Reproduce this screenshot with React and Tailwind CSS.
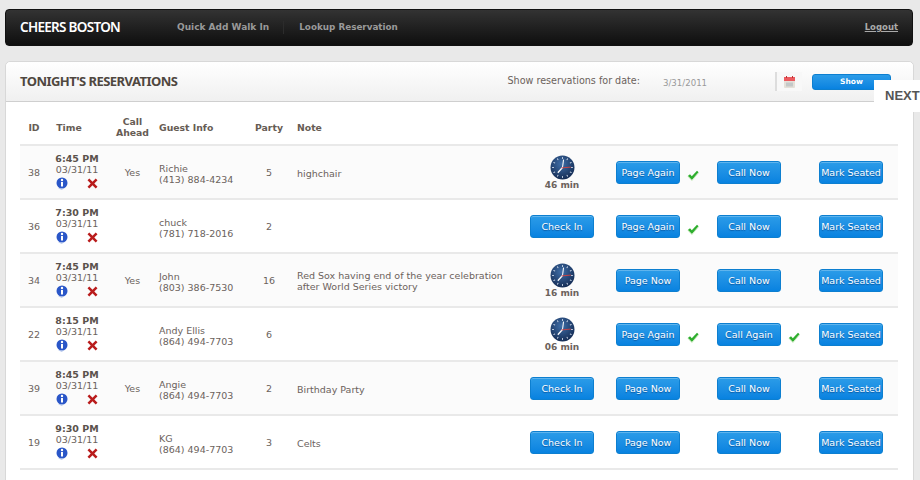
import React from 'react';

const rows = [
  { id: 38, time: '6:45 PM', ahead: 'Yes', name: 'Richie', phone: '(413) 884-4234', party: 5, note: 'highchair', wait: '46 min', page: 'Page Again', pageOk: true, call: 'Call Now', shade: true },
  { id: 36, time: '7:30 PM', ahead: '', name: 'chuck', phone: '(781) 718-2016', party: 2, note: '', page: 'Page Again', pageOk: true, call: 'Call Now' },
  { id: 34, time: '7:45 PM', ahead: 'Yes', name: 'John', phone: '(803) 386-7530', party: 16, note: 'Red Sox having end of the year celebration after World Series victory', wait: '16 min', page: 'Page Now', call: 'Call Now', shade: true },
  { id: 22, time: '8:15 PM', ahead: '', name: 'Andy Ellis', phone: '(864) 494-7703', party: 6, note: '', wait: '06 min', page: 'Page Again', pageOk: true, call: 'Call Again', callOk: true },
  { id: 39, time: '8:45 PM', ahead: 'Yes', name: 'Angie', phone: '(864) 494-7703', party: 2, note: 'Birthday Party', page: 'Page Now', call: 'Call Now', shade: true },
  { id: 19, time: '9:30 PM', ahead: '', name: 'KG', phone: '(864) 494-7703', party: 3, note: 'Celts', page: 'Page Now', call: 'Call Now' },
];

const BlueButton = ({ children }) => (
  <button type="button" className="w-16 h-[23px] mt-[1px] rounded-[3px] border border-[#0d7fd0] bg-gradient-to-b from-[#2b9ce8] to-[#0782e0] text-white text-[9.5px] leading-none whitespace-nowrap [text-shadow:0_1px_1px_rgba(0,50,110,0.6)] shadow-[inset_0_1px_0_rgba(255,255,255,0.25)]">
    {children}
  </button>
);

const CheckIcon = () => (
  <svg width="12" height="11" viewBox="0 0 12 11" className="ml-[7px] mt-[7px]">
    <path d="M0.8 6 L3 4.2 L4.8 6.2 L10 0.8 L11.6 2.2 L4.9 10 Z" fill="#2eae2e" />
    <path d="M1 6.3 L4.9 10.6 L11.4 3" fill="none" stroke="#bfe6b0" strokeWidth="0.8" />
  </svg>
);

const InfoIcon = () => (
  <svg width="12" height="13" viewBox="0 0 12 13">
    <circle cx="6" cy="6" r="5.5" fill="#2a56c8" />
    <path d="M2 11.5 L6 12.8 L8 11 Z" fill="#9db4e6" />
    <circle cx="6" cy="3" r="1.2" fill="#fff" />
    <rect x="5" y="5" width="2" height="4.5" fill="#fff" />
  </svg>
);

const CrossIcon = () => (
  <svg width="11" height="11" viewBox="0 0 11 11">
    <path d="M0.5 2.3 L2.3 0.5 L5.5 3.7 L8.7 0.5 L10.5 2.3 L7.3 5.5 L10.5 8.7 L8.7 10.5 L5.5 7.3 L2.3 10.5 L0.5 8.7 L3.7 5.5 Z" fill="#b91c1c" />
  </svg>
);

const ClockIcon = () => (
  <svg width="25" height="25" viewBox="0 0 24 24">
    <defs>
      <radialGradient id="clockFace" cx="45%" cy="35%" r="70%">
        <stop offset="0%" stopColor="#3f6ea8" />
        <stop offset="100%" stopColor="#12284f" />
      </radialGradient>
    </defs>
    <circle cx="12" cy="12" r="11.5" fill="url(#clockFace)" />
    {[0, 30, 60, 90, 120, 150, 180, 210, 240, 270, 300, 330].map((deg) => (
      <rect key={deg} x="11.6" y="2" width="0.8" height="1.8" fill="#dfe8f5" transform={`rotate(${deg} 12 12)`} />
    ))}
    <path d="M12 12 L13 4.5" stroke="#fff" strokeWidth="1" />
    <path d="M12 12 L7.5 17" stroke="#fff" strokeWidth="1.2" />
    <path d="M11 12.4 L20 11.6" stroke="#e2403a" strokeWidth="0.8" />
  </svg>
);

const CalendarIcon = () => (
  <svg width="11" height="12" viewBox="0 0 11 12">
    <rect x="0" y="1" width="11" height="11" rx="1" fill="#e4e0d8" />
    <rect x="0" y="1" width="11" height="4" fill="#ec5a5f" />
    <rect x="2" y="0" width="1" height="2" fill="#b33" />
    <rect x="8" y="0" width="1" height="2" fill="#b33" />
    <rect x="2" y="6.5" width="7" height="4" fill="#c4c8c8" />
  </svg>
);

const Row = ({ row }) => (
  <div className={`flex items-stretch h-[54px] border-b-2 border-[#e9e9e9] text-[9.5px] text-[#6b625c] ${row.shade ? 'bg-[#fbfbfb]' : 'bg-white'}`}>
    <div className="w-[28px] pt-[2px] flex items-center justify-center">{row.id}</div>
    <div className="w-[58px] flex flex-col items-center pt-[7px] leading-[11px]">
      <span className="font-bold text-[#5a524c]">{row.time}</span>
      <span>03/31/11</span>
      <div className="flex w-[44px] justify-between items-start px-[1px] mt-[2px]">
        <InfoIcon />
        <span className="mt-[1px]"><CrossIcon /></span>
      </div>
    </div>
    <div className="w-[53px] pt-[2px] flex items-center justify-center">{row.ahead}</div>
    <div className="w-[100px] pt-[3px] flex flex-col justify-center leading-[11px]">
      <span>{row.name}</span>
      <span>{row.phone}</span>
    </div>
    <div className="w-[20px] pt-[2px] flex items-center justify-center">{row.party}</div>
    <div className="w-[233px] ml-[18px] pt-[2px] pr-[20px] flex items-center leading-[11px]">{row.note}</div>
    <div className="w-[64px] flex flex-col items-center justify-center">
      {row.wait ? (
        <>
          <ClockIcon />
          <span className="font-bold text-[9px] leading-[10px]">{row.wait}</span>
        </>
      ) : (
        <BlueButton>Check In</BlueButton>
      )}
    </div>
    <div className="w-[101px] ml-[22px] flex items-center">
      <BlueButton>{row.page}</BlueButton>
      {row.pageOk && <CheckIcon />}
    </div>
    <div className="w-[102px] flex items-center">
      <BlueButton>{row.call}</BlueButton>
      {row.callOk && <CheckIcon />}
    </div>
    <div className="flex items-center">
      <BlueButton>Mark Seated</BlueButton>
    </div>
  </div>
);

export default function App() {
  return (
    <div className="relative h-[480px] w-[920px] overflow-hidden bg-[#e9e9e9] font-['DejaVu_Sans',sans-serif]">
      {/* top bar */}
      <div className="mx-[5px] mt-[9px] h-[37px] w-[908px] rounded-[4px] border border-[#111] bg-gradient-to-b from-[#333] to-[#0f0f0f] flex items-center px-[14px]">
        <span className="font-['Noto_Sans',sans-serif] font-semibold text-[13.5px] text-white tracking-[-0.7px] w-[157px]">CHEERS BOSTON</span>
        <span className="font-bold text-[9px] text-[#999] pr-[14px] border-r border-[#2c2c2c]">Quick Add Walk In</span>
        <span className="font-bold text-[8.8px] text-[#999] pl-[15px]">Lookup Reservation</span>
        <a className="ml-auto font-bold text-[8.5px] text-[#aaa] underline">Logout</a>
      </div>

      {/* panel */}
      <div className="ml-[5px] mt-[15px] w-[909px] h-[430px] rounded-t-[5px] border border-[#d8d8d8] bg-white">
        <div className="h-[40px] border-b border-[#cfcfcf] bg-gradient-to-b from-white to-[#f0f0f0] rounded-t-[5px] flex items-center pl-[14px] pr-[22px]">
          <h2 className="font-['Noto_Sans',sans-serif] font-bold text-[13px] tracking-[-0.55px] text-[#4f473f] uppercase">Tonight's Reservations</h2>
          <span className="ml-auto text-[9.6px] text-[#6b625c]">Show reservations for date:</span>
          <span className="ml-[23px] mt-[3px] text-[8.6px] text-[#999] w-[112px]">3/31/2011</span>
          <div className="w-[27px] h-[19px] border-l-2 border-[#ddd] bg-[#f8f8f8] flex items-center justify-center mr-[10px]">
            <CalendarIcon />
          </div>
          <button type="button" className="w-[79px] h-[16px] rounded-[3px] border border-[#0d7fd0] bg-gradient-to-b from-[#2b9ce8] to-[#0782e0] text-white font-bold text-[7.5px] leading-none">Show</button>
        </div>

        <div className="mx-[14px] w-[878px]">
          <div className="flex h-[44px] pt-[8px] items-center border-b-2 border-[#e9e9e9] text-[9.3px] font-bold text-[#665c54] leading-[11px]">
            <div className="w-[28px] text-center">ID</div>
            <div className="w-[58px] text-center pr-[16px]">Time</div>
            <div className="w-[53px] text-center">Call<br />Ahead</div>
            <div className="w-[96px]">Guest Info</div>
            <div className="w-[28px] text-center">Party</div>
            <div className="ml-[14px]">Note</div>
          </div>
          {rows.map((row) => (
            <Row key={row.id} row={row} />
          ))}
        </div>
      </div>

      {/* floating tab */}
      <div className="absolute left-[874px] top-[80px] w-[46px] h-[32px] bg-white flex items-center pl-[11px]">
        <span className="font-['Liberation_Sans',sans-serif] font-bold text-[13px] text-[#555]">NEXT</span>
      </div>
    </div>
  );
}
